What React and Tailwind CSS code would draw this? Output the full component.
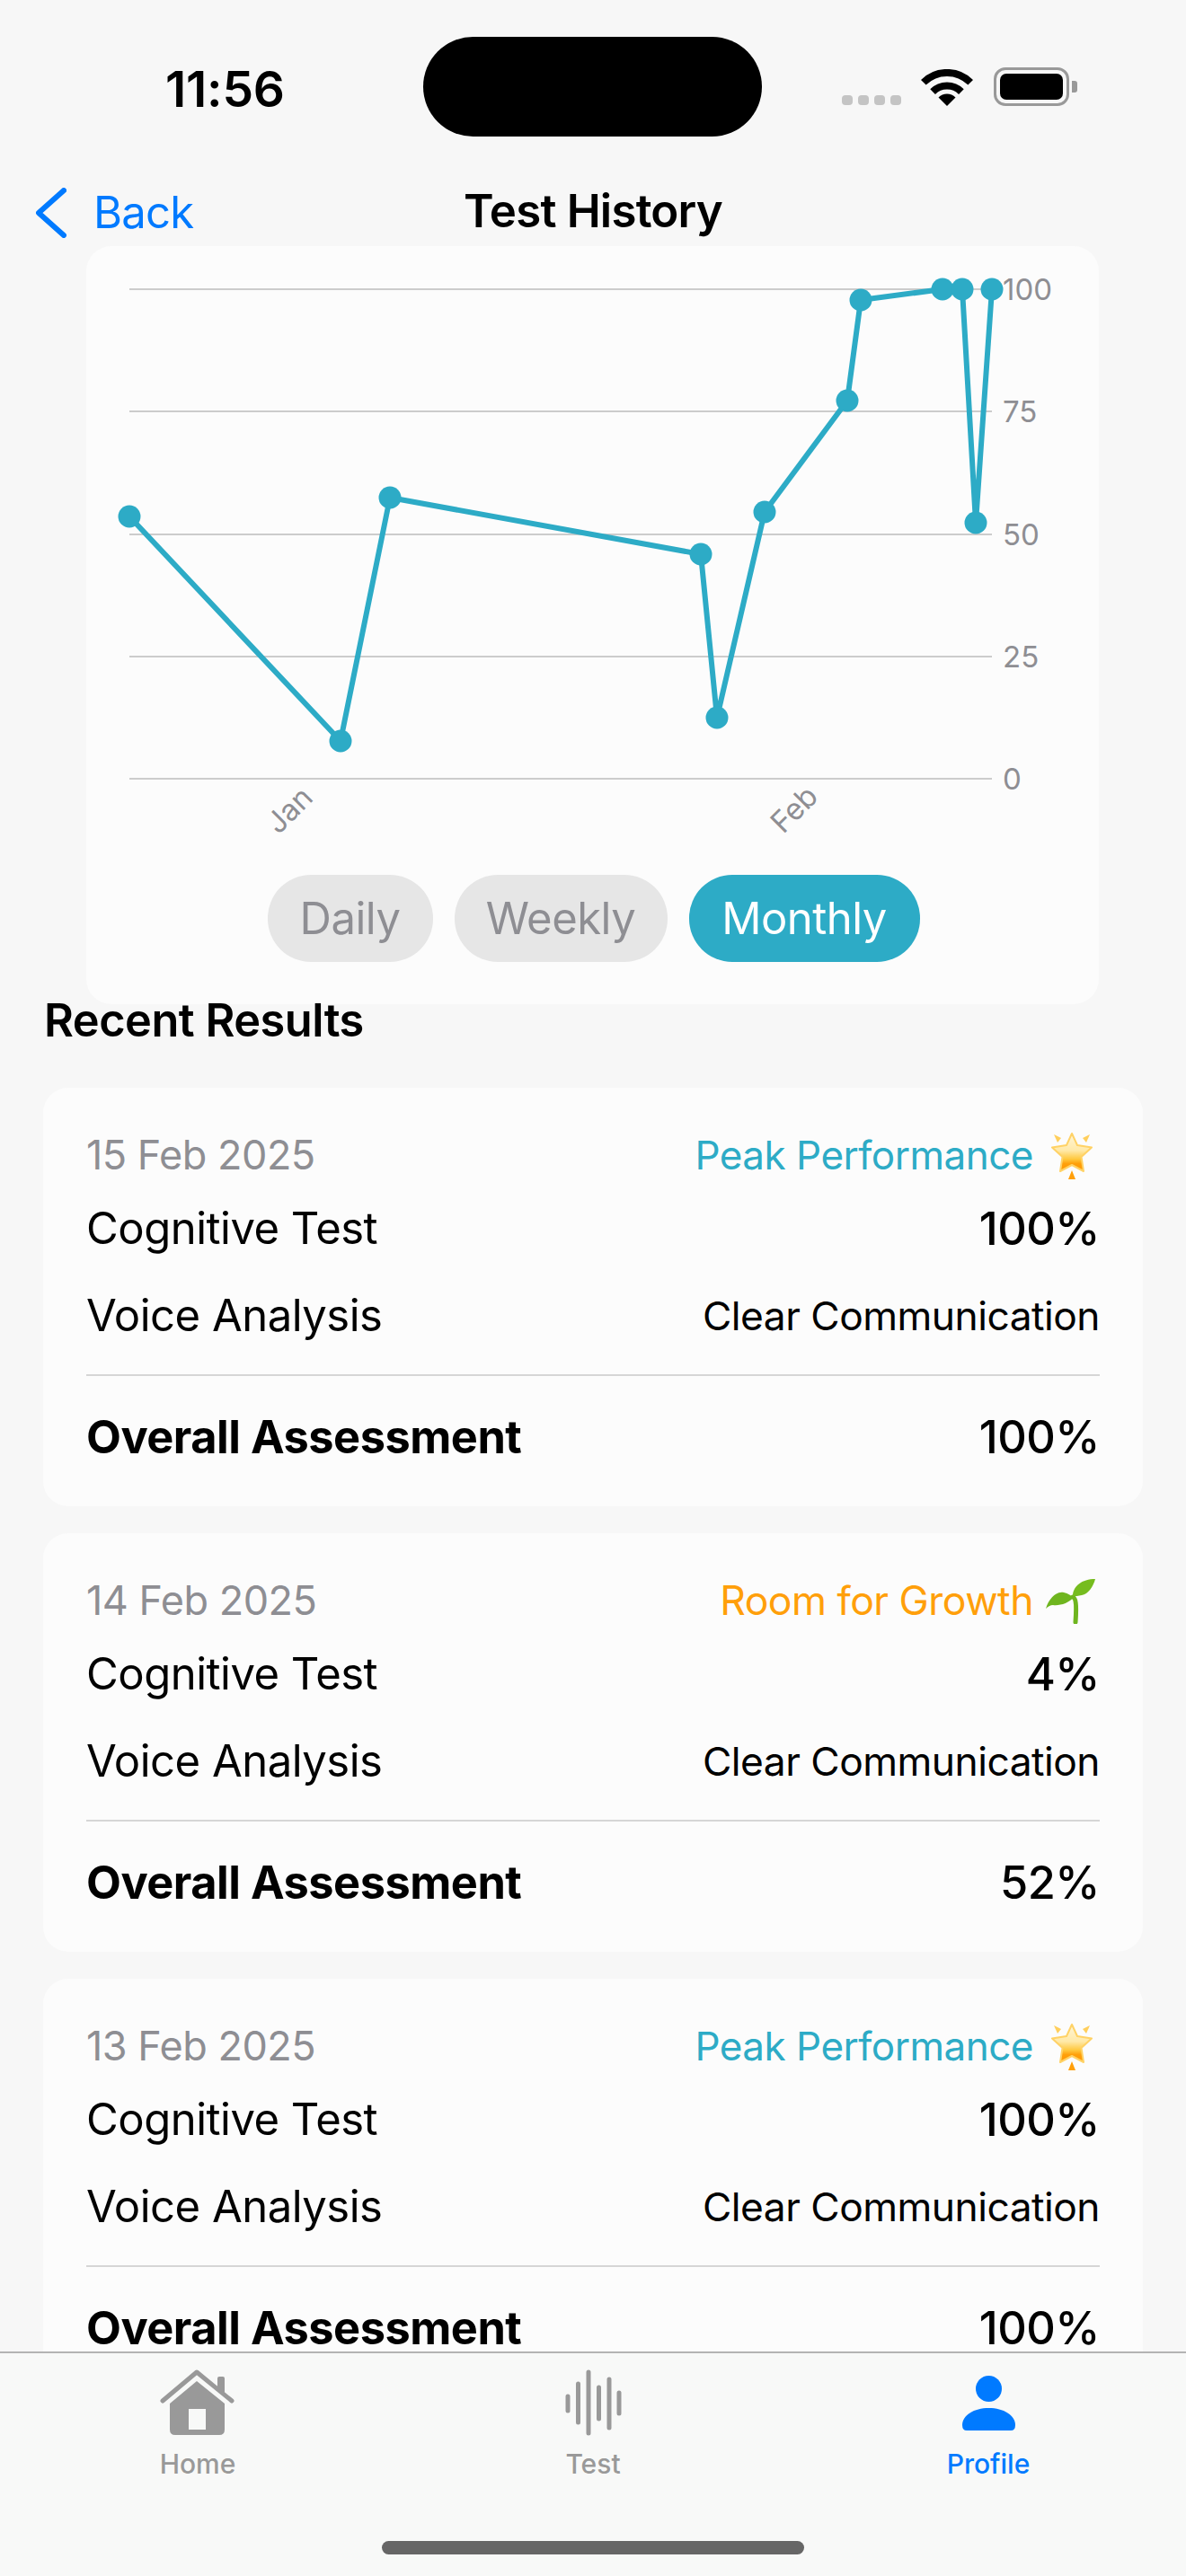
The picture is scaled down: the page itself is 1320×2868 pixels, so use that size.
const TEAL = '#2dabc6';

const chartPoints = [
  [48, 301], [283, 551], [338, 280], [684, 343], [702, 525], [755, 296],
  [847, 172], [862, 60], [953, 48], [975, 48], [990, 308], [1008, 48],
];

const gridLines = [
  { y: 48, label: '100' },
  { y: 184, label: '75' },
  { y: 321, label: '50' },
  { y: 457, label: '25' },
  { y: 593, label: '0' },
];

const results = [
  { date: '15 Feb 2025', status: 'Peak Performance', kind: 'peak', cognitive: '100%', overall: '100%' },
  { date: '14 Feb 2025', status: 'Room for Growth', kind: 'growth', cognitive: '4%', overall: '52%' },
  { date: '13 Feb 2025', status: 'Peak Performance', kind: 'peak', cognitive: '100%', overall: '100%' },
];

function StatusBar() {
  return (
    <div className="flex h-[190px] shrink-0 items-start pt-[41px]">
      <div className="ml-[184px] w-[287px] pt-[28px] text-[55px] leading-[60px] font-semibold tracking-[-0.2px] text-black">11:56</div>
      <div className="h-[111px] w-[377px] rounded-[56px] bg-black" />
      <div className="ml-[89px] flex items-end pt-[34px]">
        <div className="mb-[1px] flex gap-[6px]">
          <div className="h-[11px] w-[12px] rounded-[4px] bg-[#c4c4c4]" />
          <div className="h-[11px] w-[12px] rounded-[4px] bg-[#c4c4c4]" />
          <div className="h-[11px] w-[12px] rounded-[4px] bg-[#c4c4c4]" />
          <div className="h-[11px] w-[12px] rounded-[4px] bg-[#c4c4c4]" />
        </div>
        <svg className="ml-[22px]" width="58" height="41" viewBox="0 0 58 41" fill="none">
          <path d="M2.8 14.8A37 37 0 0 1 55.2 14.8" stroke="black" strokeWidth="8" />
          <path d="M13.1 25.1A22.5 22.5 0 0 1 44.9 25.1" stroke="black" strokeWidth="8" />
          <path d="M29 41L19.5 31.5A13.4 13.4 0 0 1 38.5 31.5Z" fill="black" />
        </svg>
        <div className="ml-[23px] flex items-center">
          <div className="h-[43px] w-[84px] rounded-[13px] border-[3px] border-[#999999] p-[4px]">
            <div className="h-full w-full rounded-[7px] bg-black" />
          </div>
          <div className="ml-[3px] h-[13px] w-[6px] rounded-r-[3px] bg-[#999999]" />
        </div>
      </div>
    </div>
  );
}

function NavBar() {
  return (
    <div className="relative flex h-[84px] shrink-0 items-center justify-center pt-[6px]">
      <div className="absolute top-[17px] left-[40px] flex items-center text-[#007aff]">
        <svg width="34" height="56" viewBox="0 0 34 56" fill="none">
          <path d="M31 3L3 28L31 53" stroke="currentColor" strokeWidth="6" strokeLinecap="round" strokeLinejoin="round" />
        </svg>
        <span className="ml-[30px] text-[49px] leading-[60px] tracking-[-0.8px]">Back</span>
      </div>
      <h1 className="text-[51px] leading-[60px] font-semibold tracking-[-0.8px] text-black">Test History</h1>
    </div>
  );
}

function Chart() {
  const line = chartPoints.map((p) => p.join(',')).join(' ');
  return (
    <svg className="block" width="1127" height="700" viewBox="0 0 1127 700">
      {gridLines.map((g) => (
        <g key={g.label}>
          <line x1="48" x2="1008" y1={g.y} y2={g.y} stroke="#cccccc" strokeWidth="2" />
          <text x="1020" y={g.y + 12} fontSize="33" fill="#8e8e93" fontFamily="Inter, sans-serif">{g.label}</text>
        </g>
      ))}
      <polyline points={line} fill="none" stroke={TEAL} strokeWidth="6" strokeLinejoin="round" />
      {chartPoints.map(([x, y]) => (
        <circle key={x} cx={x} cy={y} r="12.500" fill={TEAL} />
      ))}
      <text x="234" y="636" fontSize="33" fill="#8e8e93" fontFamily="Inter, sans-serif" textAnchor="middle" transform="rotate(-45 234 636)">Jan</text>
      <text x="796" y="635" fontSize="33" fill="#8e8e93" fontFamily="Inter, sans-serif" textAnchor="middle" transform="rotate(-45 796 635)">Feb</text>
    </svg>
  );
}

function GlowingStar() {
  return (
    <svg width="50" height="53" viewBox="0 0 50 53">
      <defs>
        <linearGradient id="star-fill" x1="0" y1="0" x2="0" y2="1">
          <stop offset="0" stopColor="#fff6d8" />
          <stop offset="0.45" stopColor="#ffe9a8" />
          <stop offset="0.68" stopColor="#ffc83d" />
          <stop offset="0.8" stopColor="#ff9f0a" />
          <stop offset="1" stopColor="#ff9800" />
        </linearGradient>
      </defs>
      <path d="M25 2L31 15L47 17.5L35.500 28L38 44L25 37L12 44L14.500 28L3 17.500L19 15Z" fill="url(#star-fill)" stroke="#ffd266" strokeWidth="2" strokeLinejoin="round" />
      <path d="M5 3L13 7L9 12Z" fill="#ffcf5c" />
      <path d="M45 3L37 7L41 12Z" fill="#ffcf5c" />
      <path d="M25 43L29 53H21Z" fill="#ff9f0a" />
    </svg>
  );
}

function Seedling() {
  return (
    <svg width="55" height="51" viewBox="0 0 55 51" fill="none">
      <path d="M30 21C33 22 34.500 28 33 49" stroke="#6fb51f" strokeWidth="5" strokeLinecap="round" />
      <path d="M0 34C3 23 12 14 20 16C25 17 28 20 31 21C26 28 15 31 8 30C5 30 2 32 0 34Z" fill="#6fb51f" />
      <path d="M30 20C30 9 40 1 55 1C53 9 47 18 40 19C36 20 33 20 30 20Z" fill="#76bc1f" />
    </svg>
  );
}

function ResultCard({ date, status, kind, cognitive, overall }) {
  return (
    <div className="rounded-[28px] bg-[#fcfcfc] px-[48px] pt-[45px] pb-[47px] text-black">
      <div className="flex h-[60px] items-center justify-between">
        <span className="text-[45px] tracking-[-0.5px] text-[#8e8e93]">{date}</span>
        <span className={kind === 'peak' ? 'mr-[6px] flex items-center gap-[18px] text-[44px] tracking-[-0.5px] text-[#2dabc6]' : 'mr-[5px] flex items-center gap-[14px] text-[44.5px] tracking-[-0.5px] text-[#ff9f0a]'}>
          {status}
          {kind === 'peak' ? <GlowingStar /> : <Seedling />}
        </span>
      </div>
      <div className="mt-[22px] flex h-[60px] items-center justify-between text-[49px] tracking-[-0.5px]">
        <span>Cognitive Test</span>
        <span className="text-[50.5px] font-medium">{cognitive}</span>
      </div>
      <div className="mt-[37px] flex h-[60px] items-center justify-between text-[49px] tracking-[-0.5px]">
        <span>Voice Analysis</span>
        <span className="text-[44.3px]">Clear Communication</span>
      </div>
      <div className="mt-[35px] border-t-2 border-[#d6d6d6] pt-[38px]">
        <div className="flex h-[60px] items-center justify-between text-[50.5px] leading-[50px] tracking-[-0.5px]">
          <span className="font-bold">Overall Assessment</span>
          <span className="font-medium">{overall}</span>
        </div>
      </div>
    </div>
  );
}

function TabBar() {
  return (
    <div className="grid h-[250px] shrink-0 grid-cols-3 border-t-2 border-[#b4b4b4] bg-[#f8f9f8]">
      <div className="relative flex flex-col items-center pt-[18px] text-[#999999]">
        <svg width="84" height="74" viewBox="0 0 84 74" fill="none">
          <path d="M3 35L41 3L80 35" stroke="currentColor" strokeWidth="5" strokeLinecap="round" strokeLinejoin="round" />
          <path d="M64 20V10Q64 8 66 8H70Q72 8 72 10V27Z" fill="currentColor" />
          <path fillRule="evenodd" clipRule="evenodd" d="M41 13L72 38V67Q72 73 66 73H17Q11 73 11 67V38ZM32 44V67H51V44Z" fill="currentColor" />
        </svg>
        <span className="mt-[13px] text-[30px] leading-[36px] font-medium">Home</span>
      </div>
      <div className="flex flex-col items-center pt-[18px] text-[#999999]">
        <svg width="63" height="74" viewBox="0 0 63 74" fill="none" stroke="currentColor" strokeWidth="5" strokeLinecap="round">
          <path d="M3 30V46" />
          <path d="M14.500 16V59" />
          <path d="M26 3V71" />
          <path d="M37.500 20V55" />
          <path d="M49 11V65" />
          <path d="M60 26V49" />
        </svg>
        <span className="mt-[13px] text-[30px] leading-[36px] font-medium">Test</span>
      </div>
      <div className="flex flex-col items-center pt-[25px] text-[#007aff]">
        <svg width="59" height="61" viewBox="0 0 59 61" fill="currentColor">
          <circle cx="29.500" cy="14.500" r="14.500" />
          <path d="M0 55C0 44 13 36 29.500 36S59 44 59 55Q59 61 54 61H5Q0 61 0 55Z" />
        </svg>
        <span className="mt-[19px] text-[30px] leading-[36px] font-medium">Profile</span>
      </div>
    </div>
  );
}

export default function App() {
  return (
    <div className="relative flex h-[2868px] w-[1320px] flex-col overflow-hidden bg-[#f7f7f7] font-['Inter',sans-serif]">
      <StatusBar />
      <NavBar />

      <main className="min-h-0 flex-1 overflow-hidden">
        <section className="mr-[97px] ml-[96px] rounded-[28px] bg-[#fcfcfc]">
          <Chart />
          <div className="flex justify-center gap-[24px] pb-[47px] pl-[2px] text-[49px] tracking-[-0.5px]">
            <button className="h-[97px] w-[184px] rounded-[48px] bg-[#e6e6e6] text-[#8e8e93]">Daily</button>
            <button className="h-[97px] w-[237px] rounded-[48px] bg-[#e6e6e6] text-[#8e8e93]">Weekly</button>
            <button className="h-[97px] w-[257px] rounded-[48px] bg-[#2dabc6] text-white">Monthly</button>
          </div>
        </section>

        <h2 className="-mt-[12px] ml-[49px] text-[50.5px] leading-[60px] font-semibold tracking-[-0.5px] text-black">Recent Results</h2>

        <div className="mx-[48px] mt-[45px] flex flex-col gap-[30px]">
          {results.map((r) => (
            <ResultCard key={r.date} {...r} />
          ))}
        </div>
      </main>

      <TabBar />
      <div className="absolute bottom-[24px] left-[425px] h-[15px] w-[470px] rounded-full bg-[#666666]" />
    </div>
  );
}
